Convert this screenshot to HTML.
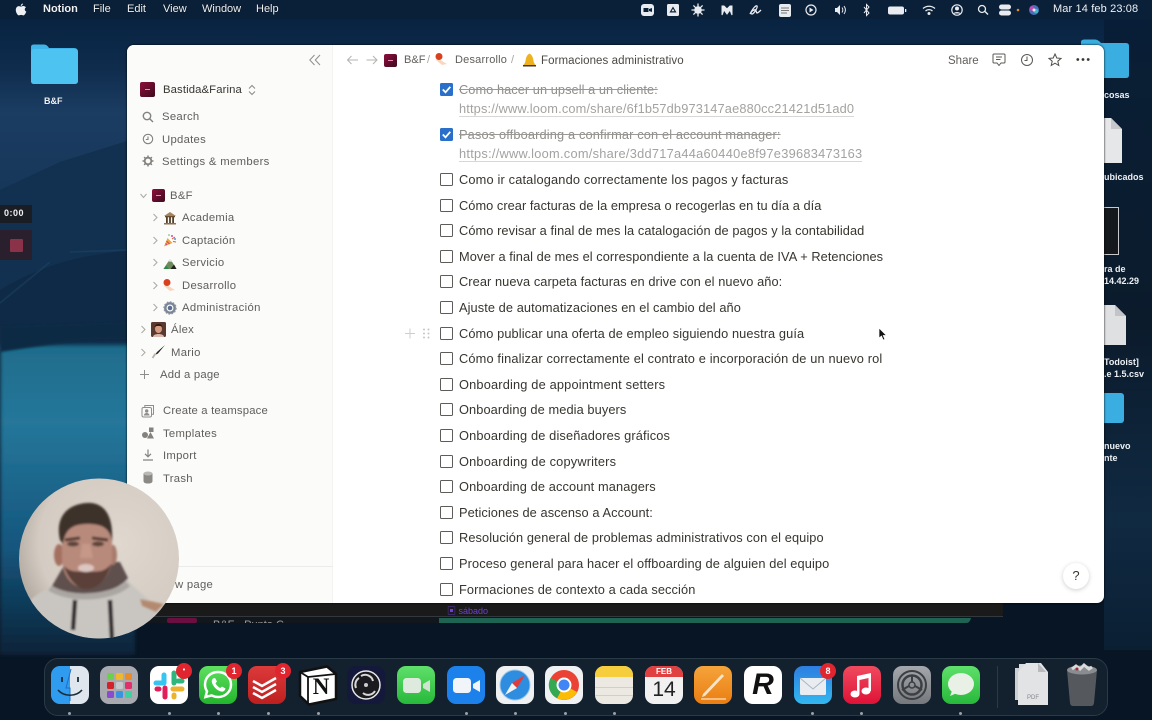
<!DOCTYPE html>
<html><head><meta charset="utf-8"><style>
html,body{margin:0;padding:0;width:1152px;height:720px;overflow:hidden;background:#0a1a2e}
*{box-sizing:border-box}
body{position:relative;font-family:"Liberation Sans","Noto Sans CJK JP",sans-serif;filter:blur(.3px)}
.a{position:absolute}
.t{position:absolute;white-space:nowrap;line-height:16px}
.mb{color:#f0f2f5;font-size:11px;top:1px;font-weight:700;text-shadow:0 0 1px #000}
.dl{color:#eef1f4;font-size:9px;font-weight:700;line-height:11px;text-align:left;white-space:nowrap;position:absolute}
.sb{color:#5f5e5b;font-size:11.3px;letter-spacing:.28px;margin-top:1px}
.r{color:#37352f;font-size:12.8px;letter-spacing:.14px;left:459px}
.d{color:#8f8e8a;font-size:12.8px;letter-spacing:.14px;left:459px;text-decoration:line-through;text-decoration-color:#9a9995}
.l{color:#a3a2a0;font-size:12.8px;letter-spacing:.15px;left:459px;border-bottom:1px solid #d8d7d5;line-height:14px;height:15px}
.cb{position:absolute;left:440px;width:13px;height:13px;border:1.2px solid #5d5c59;border-radius:1.5px;background:#fff}
.ck{position:absolute;left:440px;width:13px;height:13px;background:#2a6fc9;border-radius:1.5px}
.ic{position:absolute;width:38px;height:38px;border-radius:9px;top:666px;overflow:hidden}
.dot{position:absolute;top:712px;width:3px;height:3px;border-radius:50%;background:#9aa0a6}
.bd{position:absolute;top:663px;width:16px;height:16px;border-radius:50%;background:#e0252f;color:#fff;font-size:9px;line-height:16px;text-align:center;font-weight:700}
</style></head><body>

<!-- wallpaper -->
<svg class="a" style="left:0;top:0" width="1152" height="720" viewBox="0 0 1152 720">
<defs>
<linearGradient id="sky" x1="0" y1="0" x2="0" y2="1"><stop offset="0" stop-color="#06203d"/><stop offset=".2" stop-color="#0f2c4d"/><stop offset=".33" stop-color="#1b3d62"/><stop offset="1" stop-color="#0f2a48"/></linearGradient>
<linearGradient id="sea" x1="0" y1="0" x2="0" y2="1"><stop offset="0" stop-color="#1f6c8c"/><stop offset=".25" stop-color="#25779a"/><stop offset=".65" stop-color="#15567e"/><stop offset="1" stop-color="#0a2338"/></linearGradient>
<linearGradient id="rt" x1="0" y1="0" x2="0" y2="1"><stop offset="0" stop-color="#071d38"/><stop offset=".12" stop-color="#0a1e34"/><stop offset=".5" stop-color="#0b1b2c"/><stop offset=".8" stop-color="#102a42"/><stop offset="1" stop-color="#0b1f33"/></linearGradient>
<filter id="b2"><feGaussianBlur stdDeviation="2"/></filter>
<filter id="b1"><feGaussianBlur stdDeviation="1"/></filter>
<filter id="b05"><feGaussianBlur stdDeviation=".5"/></filter>
</defs>
<rect width="1152" height="720" fill="#071524"/>
<rect width="1152" height="340" fill="url(#sky)"/>
<path d="M0 190L60 162L130 140V350H0Z" fill="#12304f"/>
<path d="M0 290C50 260 90 255 130 250V350H0Z" fill="#0f2a46"/>
<path d="M0 303L50 262M70 252L130 250" stroke="#2a5678" stroke-width="1" fill="none" opacity=".55" filter="url(#b05)"/>
<path d="M0 345H135V655H0Z" fill="url(#sea)" filter="url(#b2)"/>
<path d="M0 352C50 345 100 335 135 340V322L0 326Z" fill="#0f2a44" filter="url(#b1)"/>
<rect x="1104" y="0" width="48" height="650" fill="url(#rt)"/>
<!-- notion under window bar -->
<rect x="130" y="617" width="310" height="6" fill="#12171d"/>
<path d="M130 595H1003V613Q1003 617 999 617H130Z" fill="#1a1a1a"/>
<rect x="130" y="616" width="873" height="1" fill="#33383c"/>
<path d="M439 618H971Q970 623 966 623H439Z" fill="#1f6352"/>
<rect x="167" y="618" width="30" height="5" rx="2" fill="#6a0f3f"/>
</svg>
<div class="t" style="left:213px;top:618px;color:#9a9a9a;font-size:11px;height:5px;overflow:hidden;line-height:15px">B&amp;F · Punto C</div>
<div class="t" style="left:447px;top:603px;color:#6f3fd6;font-size:9px;line-height:16px">▣ sábado</div>

<!-- menu bar -->
<div class="a" style="left:0;top:0;width:1152px;height:19px;background:#0a2038"></div>
<svg class="a" style="left:15px;top:3px" width="12" height="13" viewBox="0 0 12 13"><path fill="#eef1f4" d="M8 0.5C7.900 1.800 6.900 2.900 5.800 2.900 5.700 1.700 6.900 .6 8 .5ZM6 3.600C6.600 3.600 7.300 3 8.300 3 9.300 3 10.300 3.500 10.900 4.400 9.200 5.400 9.500 7.900 11.300 8.600 10.800 10 9.600 12.400 8.300 12.400 7.500 12.400 7.100 11.900 6.100 11.900 5.100 11.900 4.700 12.400 3.900 12.400 2.500 12.400 .8 9.300 .8 7 .8 4.600 2.300 3.100 3.900 3.100 4.800 3.100 5.400 3.600 6 3.600Z"/></svg>
<div class="t mb" style="left:43px">Notion</div>
<div class="t mb" style="left:93px;font-weight:400">File</div>
<div class="t mb" style="left:127px;font-weight:400">Edit</div>
<div class="t mb" style="left:163px;font-weight:400">View</div>
<div class="t mb" style="left:202px;font-weight:400">Window</div>
<div class="t mb" style="left:256px;font-weight:400">Help</div>
<svg class="a" style="left:636px;top:0" width="420" height="19" viewBox="0 0 420 19" fill="#e8ebef">
<rect x="5" y="4" width="13" height="12" rx="3"/><rect x="7.500" y="8" width="5" height="4" fill="#0a2038"/><path d="M13 9l3-1v4l-3-1z" fill="#0a2038"/>
<rect x="31" y="4" width="12" height="12" rx="1.500"/><path d="M37 6.500l3.500 6h-7z" fill="#0a2038"/><path d="M37 8.800l1.500 2.500h-3z"/>
<circle cx="62" cy="10" r="3.800"/><path d="M62 3.500v13M55.500 10h13M57.400 5.400l9.200 9.200M66.600 5.400l-9.200 9.200" stroke="#e8ebef" stroke-width="1.300"/>
<path d="M86 15V6l2 0 3 3 3-3 2 0 0 9c-1-2-1.500-4-2-5l-3 4-3-4c-.5 1-1 3-2 5z" stroke="#e8ebef" stroke-width="1"/>
<path d="M114 14c3-6 6-9 7-8s-3 8-5 8-1-3 2-4 2 3 3 3 3-2 4-3" fill="none" stroke="#e8ebef" stroke-width="1.300"/>
<rect x="143" y="4" width="12" height="13" rx="2"/><path d="M145 8h8M145 10.500h8M145 13h6" stroke="#777" stroke-width="1"/>
<circle cx="175" cy="10" r="5" fill="none" stroke="#e8ebef" stroke-width="1.200"/><path d="M173.500 7.500l4 2.500-4 2.500z"/>
<path d="M199 8h2l3-3v10l-3-3h-2z"/><path d="M206 7.500c1 1.500 1 3.500 0 5M208 6c1.800 2.500 1.800 5.500 0 8" fill="none" stroke="#e8ebef"/>
<path d="M228 7l5 6-2.500 2.500v-11l2.500 2.500-5 6" fill="none" stroke="#e8ebef" stroke-width="1"/>
<rect x="252" y="6.500" width="16" height="8" rx="2"/><rect x="269" y="9" width="1.300" height="3"/>
<path d="M287 8.500c3.500-3 8.500-3 12 0M289.500 11c2-1.800 5-1.800 7 0" fill="none" stroke="#e8ebef" stroke-width="1.300"/><circle cx="293" cy="13.500" r="1.500"/>
<circle cx="321" cy="10" r="5.200" fill="none" stroke="#e8ebef" stroke-width="1.200"/><circle cx="321" cy="8.500" r="2"/><path d="M317.500 13.500c1-2 6-2 7 0z"/>
<circle cx="346" cy="9" r="3.500" fill="none" stroke="#e8ebef" stroke-width="1.300"/><path d="M349 11.500l3 3" stroke="#e8ebef" stroke-width="1.400"/>
<rect x="363" y="4.500" width="12" height="5" rx="2.500"/><rect x="363" y="10.500" width="12" height="5" rx="2.500"/>
<circle cx="382" cy="10" r="1.300" fill="#e0892a"/>
<circle cx="398" cy="10" r="5" fill="#4a6fb8"/><circle cx="396" cy="8.500" r="2.400" fill="#c14bb0"/><circle cx="400" cy="11" r="2.300" fill="#3fb6c8"/><circle cx="398" cy="10" r="1.500" fill="#e6e6ef"/>
</svg>
<div class="t" style="left:1053px;top:1px;color:#eef1f4;font-size:11px;letter-spacing:.13px">Mar 14 feb 23:08</div>

<!-- desktop icons -->
<svg class="a" style="left:28px;top:43px" width="52" height="46" viewBox="0 0 52 46"><path d="M3 4Q3 1.500 6 1.500H16Q19 1.500 21 5H46Q50 5 50 9V38Q50 41 46 41H6Q3 41 3 38Z" fill="#3fb4e8"/><rect x="3" y="6" width="47" height="35" rx="3" fill="#4cc3f1"/></svg>
<div class="dl" style="left:44px;top:96px">B&amp;F</div>
<svg class="a" style="left:1080px;top:39px" width="50" height="42" viewBox="0 0 50 42"><path d="M1 3Q1 .5 5 .5H15Q18 .5 21 4H46Q49 4 49 7V36Q49 39 46 39H4Q1 39 1 36Z" fill="#3aaee0"/></svg>
<div class="dl" style="left:1104px;top:90px">cosas</div>
<svg class="a" style="left:1087px;top:117px" width="36" height="47" viewBox="0 0 36 47"><path d="M4 1H24L35 12V46H4Z" fill="#e6e7e9"/><path d="M24 1L35 12H24Z" fill="#c6c8cc"/></svg>
<div class="dl" style="left:1104px;top:172px">ubicados</div>
<div class="a" style="left:1096px;top:207px;width:23px;height:48px;background:#15181c;border:1.500px solid #c7c9cc"></div>
<div class="dl" style="left:1104px;top:264px">ra de</div>
<div class="dl" style="left:1104px;top:276px">14.42.29</div>
<svg class="a" style="left:1089px;top:304px" width="38" height="42" viewBox="0 0 38 42"><path d="M4 1H26L37 12V41H4Z" fill="#dfe0e2"/><path d="M26 1L37 12H26Z" fill="#c2c4c8"/></svg>
<div class="dl" style="left:1104px;top:357px">Todoist]</div>
<div class="dl" style="left:1104px;top:369px">.e 1.5.csv</div>
<div class="a" style="left:1095px;top:393px;width:29px;height:30px;background:#3aaee0;border-radius:3px"></div>
<div class="dl" style="left:1104px;top:441px">nuevo</div>
<div class="dl" style="left:1104px;top:453px">nte</div>

<!-- window -->
<div class="a" style="left:127px;top:45px;width:977px;height:558px;background:#fff;border-radius:7px;overflow:hidden;box-shadow:0 0 2px #000">
<div class="a" style="left:0;top:0;width:206px;height:558px;background:#fbfbfa;border-right:1px solid #f3f3f1"></div>
<div class="a" style="left:0;top:521px;width:206px;height:1px;background:#ecebe9"></div>
</div>

<!-- sidebar -->
<svg class="a" style="left:309px;top:54px" width="12" height="12" viewBox="0 0 12 12" fill="none" stroke="#8f8e8b" stroke-width="1"><path d="M5.500 1L.8 6l4.700 5M11 1L6.300 6l4.700 5"/></svg>
<div class="a" style="left:140px;top:82px;width:15px;height:15px;border-radius:2px;background:linear-gradient(135deg,#8c0f3c,#3e0a1e)"><div class="a" style="left:5px;top:7px;width:5px;height:1px;background:#e8b"></div></div>
<div class="t" style="left:163px;top:82px;color:#37352f;font-size:11.3px;letter-spacing:.12px">Bastida&amp;Farina</div>
<svg class="a" style="left:247px;top:84px" width="10" height="12" viewBox="0 0 10 12" fill="none" stroke="#8a8985" stroke-width="1"><path d="M2 4.500L5 1.500l3 3M2 7.500l3 3 3-3"/></svg>

<svg class="a" style="left:141px;top:110px" width="14" height="14" viewBox="0 0 14 14" fill="none" stroke="#84827e" stroke-width="1.400"><circle cx="6" cy="6" r="3.700"/><path d="M8.700 8.700L12 12"/></svg>
<div class="t sb" style="left:162px;top:108px">Search</div>
<svg class="a" style="left:141px;top:132px" width="14" height="14" viewBox="0 0 14 14" fill="none" stroke="#84827e" stroke-width="1.100"><circle cx="7" cy="7" r="4.700"/><path d="M7 4.500V7.500H4.800"/></svg>
<div class="t sb" style="left:162px;top:131px">Updates</div>
<svg class="a" style="left:141px;top:154px" width="14" height="14" viewBox="0 0 14 14" fill="none" stroke="#84827e"><circle cx="7" cy="7" r="3.300" stroke-width="1.800"/><path d="M7 1.500v2.400M7 10.100v2.400M1.500 7h2.400M10.100 7h2.400M3.100 3.100l1.700 1.700M9.200 9.200l1.700 1.700M3.100 10.900l1.700-1.700M9.200 4.800l1.700-1.700" stroke-width="1.500"/></svg>
<div class="t sb" style="left:162px;top:153px;letter-spacing:.33px">Settings &amp; members</div>

<svg class="a" style="left:139px;top:191px" width="9" height="9" viewBox="0 0 9 9" fill="none" stroke="#a8a7a3"><path d="M1.500 3L4.500 6.500 7.500 3"/></svg>
<div class="a" style="left:152px;top:189px;width:13px;height:13px;border-radius:2px;background:linear-gradient(135deg,#8c0f3c,#3e0a1e)"><div class="a" style="left:4px;top:6px;width:5px;height:1px;background:#e8b"></div></div>
<div class="t sb" style="left:170px;top:187px">B&amp;F</div>

<svg class="a" style="left:151px;top:213px" width="8" height="9" viewBox="0 0 8 9" fill="none" stroke="#a8a7a3"><path d="M2.500 1L6 4.500 2.500 8"/></svg>
<svg class="a" style="left:163px;top:211px" width="14" height="14" viewBox="0 0 14 14"><path d="M1 5L7 1l6 4z" fill="#a58560"/><rect x="2" y="5" width="10" height="1.300" fill="#6a4f33"/><rect x="3" y="6" width="1.800" height="6" fill="#574027"/><rect x="6.100" y="6" width="1.800" height="6" fill="#574027"/><rect x="9.200" y="6" width="1.800" height="6" fill="#574027"/><rect x="1" y="12" width="12" height="1.500" fill="#8c7352"/></svg>
<div class="t sb" style="left:182px;top:209px">Academia</div>

<svg class="a" style="left:151px;top:236px" width="8" height="9" viewBox="0 0 8 9" fill="none" stroke="#a8a7a3"><path d="M2.500 1L6 4.500 2.500 8"/></svg>
<svg class="a" style="left:163px;top:233px" width="14" height="14" viewBox="0 0 14 14"><path d="M1 13.500L4.500 5l5 5z" fill="#eca93a"/><path d="M3.500 8l3 3M2.500 10.500l1.500 1.500" stroke="#d4457a" stroke-width="1.200"/><circle cx="9" cy="3" r="1" fill="#d64b9a"/><circle cx="12" cy="6" r="1" fill="#4b9ad6"/><circle cx="6" cy="2" r=".8" fill="#57b35f"/><path d="M9 6l3-2M10 8.500l3 .5" stroke="#e0562d" stroke-width="1"/></svg>
<div class="t sb" style="left:182px;top:232px">Captación</div>

<svg class="a" style="left:151px;top:258px" width="8" height="9" viewBox="0 0 8 9" fill="none" stroke="#a8a7a3"><path d="M2.500 1L6 4.500 2.500 8"/></svg>
<svg class="a" style="left:163px;top:256px" width="14" height="14" viewBox="0 0 14 14"><path d="M.5 13L5 6l2-3 2.500 3.500L13.500 13z" fill="#6f8a5a"/><path d="M5.500 5.500L7 3l1.800 3-1.500-.5z" fill="#eef3f5"/><path d="M.5 13L3 9.500 6 13z" fill="#2b8a4a"/><path d="M7.500 13L11 8.500l2.500 4.500z" fill="#222"/></svg>
<div class="t sb" style="left:182px;top:254px">Servicio</div>

<svg class="a" style="left:151px;top:281px" width="8" height="9" viewBox="0 0 8 9" fill="none" stroke="#a8a7a3"><path d="M2.500 1L6 4.500 2.500 8"/></svg>
<svg class="a" style="left:162px;top:278px" width="15" height="15" viewBox="0 0 15 15"><path d="M3 6L13 12 8 13 2 8z" fill="#f9d7bd"/><circle cx="5" cy="4.500" r="3.500" fill="#d9411e"/></svg>
<div class="t sb" style="left:182px;top:277px">Desarrollo</div>

<svg class="a" style="left:151px;top:303px" width="8" height="9" viewBox="0 0 8 9" fill="none" stroke="#a8a7a3"><path d="M2.500 1L6 4.500 2.500 8"/></svg>
<svg class="a" style="left:163px;top:301px" width="14" height="14" viewBox="0 0 14 14"><circle cx="7" cy="7" r="4.700" fill="none" stroke="#7b8493" stroke-width="2.400"/><circle cx="7" cy="7" r="6" fill="none" stroke="#8e96a3" stroke-width="1.400" stroke-dasharray="1.600 1.500"/><circle cx="7" cy="7" r="2.300" fill="#5a6f98"/></svg>
<div class="t sb" style="left:182px;top:299px;letter-spacing:.33px">Administración</div>

<svg class="a" style="left:139px;top:325px" width="8" height="9" viewBox="0 0 8 9" fill="none" stroke="#a8a7a3"><path d="M2.500 1L6 4.500 2.500 8"/></svg>
<svg class="a" style="left:151px;top:322px" width="15" height="15" viewBox="0 0 15 15"><rect width="15" height="15" rx="1.500" fill="#5a3a2e"/><path d="M2 15c0-4 11-4 11 0z" fill="#d9b8b0"/><ellipse cx="7.500" cy="7" rx="3.500" ry="4" fill="#d69a80"/><path d="M3.500 5c1-4 7-4 8 0-2-1.500-6-1.500-8 0z" fill="#2c1a12"/></svg>
<div class="t sb" style="left:171px;top:321px">Álex</div>

<svg class="a" style="left:139px;top:348px" width="8" height="9" viewBox="0 0 8 9" fill="none" stroke="#a8a7a3"><path d="M2.500 1L6 4.500 2.500 8"/></svg>
<svg class="a" style="left:151px;top:344px" width="15" height="15" viewBox="0 0 15 15"><path d="M14 1L6 8 4 11l3-1.500z" fill="#222"/><path d="M4.500 9.500L1.500 14" stroke="#b9b3aa" stroke-width="1.800"/></svg>
<div class="t sb" style="left:171px;top:344px">Mario</div>

<svg class="a" style="left:139px;top:369px" width="11" height="11" viewBox="0 0 11 11" stroke="#8f8e8a" stroke-width="1"><path d="M5.500 1v9M1 5.500h9"/></svg>
<div class="t sb" style="left:160px;top:366px;letter-spacing:.2px">Add a page</div>

<svg class="a" style="left:141px;top:404px" width="14" height="14" viewBox="0 0 14 14" fill="none" stroke="#8f8e8a" stroke-width="1"><rect x="1" y="3.500" width="9.500" height="9.500" rx="1.500"/><path d="M3.800 3.500V1.500h8.700v8.700h-2"/><circle cx="5.700" cy="7" r="1.200" fill="#8f8e8a"/><path d="M3.500 11c.5-2 3.800-2 4.400 0z" fill="#8f8e8a"/></svg>
<div class="t sb" style="left:163px;top:402px;letter-spacing:.18px">Create a teamspace</div>
<svg class="a" style="left:141px;top:426px" width="14" height="14" viewBox="0 0 14 14" fill="#84827e"><circle cx="4" cy="9" r="3"/><rect x="8" y="1.500" width="4.500" height="4.500"/><path d="M9.500 6l3.500 6.500H6z"/></svg>
<div class="t sb" style="left:163px;top:425px">Templates</div>
<svg class="a" style="left:141px;top:448px" width="14" height="14" viewBox="0 0 14 14" fill="none" stroke="#84827e" stroke-width="1.200"><path d="M7 1.500v7M4 5.800L7 8.800l3-3M2 12h10"/></svg>
<div class="t sb" style="left:163px;top:447px">Import</div>
<svg class="a" style="left:141px;top:470px" width="14" height="14" viewBox="0 0 14 14"><path d="M2.500 3h9v8c0 1.500-1.500 2.500-4.500 2.500S2.500 12.500 2.500 11z" fill="#8a8985"/><ellipse cx="7" cy="3.500" rx="4.500" ry="2" fill="#b9b8b5"/></svg>
<div class="t sb" style="left:163px;top:470px">Trash</div>
<div class="t sb" style="left:175px;top:576px">w page</div>

<!-- topbar -->
<svg class="a" style="left:346px;top:54px" width="33" height="12" viewBox="0 0 33 12" fill="none" stroke="#b4b3b0" stroke-width="1"><path d="M12 6H1.500M5.500 2L1.500 6l4 4M20.500 6H31M27 2l4 4-4 4"/></svg>
<div class="a" style="left:384px;top:54px;width:13px;height:13px;border-radius:2px;background:linear-gradient(135deg,#8c0f3c,#3e0a1e)"><div class="a" style="left:4px;top:6px;width:5px;height:1px;background:#e8b"></div></div>
<div class="t" style="left:404px;top:52px;color:#5f5e5b;font-size:11px;letter-spacing:.05px">B&amp;F</div>
<div class="t" style="left:427px;top:52px;color:#a5a4a1;font-size:11px">/</div>
<svg class="a" style="left:434px;top:52px" width="15" height="15" viewBox="0 0 15 15"><path d="M3 6L13 12 8 13 2 8z" fill="#f9d7bd"/><circle cx="5" cy="4.500" r="3.500" fill="#d9411e"/></svg>
<div class="t" style="left:455px;top:52px;color:#5f5e5b;font-size:11px;letter-spacing:.2px">Desarrollo</div>
<div class="t" style="left:511px;top:52px;color:#a5a4a1;font-size:11px">/</div>
<svg class="a" style="left:522px;top:53px" width="15" height="15" viewBox="0 0 15 15"><path d="M7.500 .5C10 2 11 4 11.500 8c.3 2 1.500 3 2 4H1.500c.5-1 1.700-2 2-4 .5-4 1.500-6 4-7.500z" fill="#eeb11f"/><path d="M1 12h13v1.500H1z" fill="#3a3a3a"/></svg>
<div class="t" style="left:541px;top:53px;color:#4a4843;font-size:11.500px;letter-spacing:.08px">Formaciones administrativo</div>
<div class="t" style="left:948px;top:52px;color:#5f5e5b;font-size:11.500px;margin-top:.5px">Share</div>
<svg class="a" style="left:992px;top:53px" width="14" height="14" viewBox="0 0 14 14" fill="none" stroke="#5a5955" stroke-width="1"><path d="M2 1h10q1 0 1 1v7q0 1-1 1H9l-2 2.500L5 10H2q-1 0-1-1V2q0-1 1-1zM4 4h6M4 6.500h4.500"/></svg>
<svg class="a" style="left:1020px;top:53px" width="14" height="14" viewBox="0 0 14 14" fill="none" stroke="#5a5955" stroke-width="1"><circle cx="7" cy="7" r="5.500"/><path d="M7 3.500V7.500H4.500"/></svg>
<svg class="a" style="left:1048px;top:53px" width="14" height="14" viewBox="0 0 14 14" fill="none" stroke="#4f4e4a" stroke-width="1"><path d="M7 1l1.800 4 4.200.4-3.200 2.800 1 4.300L7 10.200 3.200 12.500l1-4.300L1 5.400 5.200 5z"/></svg>
<svg class="a" style="left:1076px;top:57px" width="14" height="5" viewBox="0 0 14 5" fill="#37352f"><circle cx="1.800" cy="2.500" r="1.400"/><circle cx="7" cy="2.500" r="1.400"/><circle cx="12.200" cy="2.500" r="1.400"/></svg>

<!-- content -->
<div class="ck" style="top:83px"></div><svg class="a" style="left:440px;top:83px" width="13" height="13" viewBox="0 0 13 13" fill="none" stroke="#fff" stroke-width="1.800"><path d="M2.800 6.500l2.700 2.800 4.800-5.500"/></svg>
<div class="t d" style="top:82px;letter-spacing:.05px">Como hacer un upsell a un cliente:</div>
<div class="t l" style="top:102px">https://www.loom.com/share/6f1b57db973147ae880cc21421d51ad0</div>
<div class="ck" style="top:128px"></div><svg class="a" style="left:440px;top:128px" width="13" height="13" viewBox="0 0 13 13" fill="none" stroke="#fff" stroke-width="1.800"><path d="M2.800 6.500l2.700 2.800 4.800-5.500"/></svg>
<div class="t d" style="top:127px">Pasos offboarding a confirmar con el account manager:</div>
<div class="t l" style="top:147px;letter-spacing:.265px">https://www.loom.com/share/3dd717a44a60440e8f97e39683473163</div>

<div class="cb" style="top:173px"></div><div class="t r" style="top:172px;letter-spacing:.16px">Como ir catalogando correctamente los pagos y facturas</div>
<div class="cb" style="top:199px"></div><div class="t r" style="top:198px;letter-spacing:.04px">Cómo crear facturas de la empresa o recogerlas en tu día a día</div>
<div class="cb" style="top:224px"></div><div class="t r" style="top:223px;letter-spacing:.08px">Cómo revisar a final de mes la catalogación de pagos y la contabilidad</div>
<div class="cb" style="top:250px"></div><div class="t r" style="top:249px;letter-spacing:.06px">Mover a final de mes el correspondiente a la cuenta de IVA + Retenciones</div>
<div class="cb" style="top:275px"></div><div class="t r" style="top:274px;letter-spacing:.07px">Crear nueva carpeta facturas en drive con el nuevo año:</div>
<div class="cb" style="top:301px"></div><div class="t r" style="top:300px;letter-spacing:.08px">Ajuste de automatizaciones en el cambio del año</div>
<div class="cb" style="top:327px"></div><div class="t r" style="top:326px;letter-spacing:.09px">Cómo publicar una oferta de empleo siguiendo nuestra guía</div>
<div class="cb" style="top:352px"></div><div class="t r" style="top:351px">Cómo finalizar correctamente el contrato e incorporación de un nuevo rol</div>
<div class="cb" style="top:378px"></div><div class="t r" style="top:377px;letter-spacing:.17px">Onboarding de appointment setters</div>
<div class="cb" style="top:403px"></div><div class="t r" style="top:402px;letter-spacing:.09px">Onboarding de media buyers</div>
<div class="cb" style="top:429px"></div><div class="t r" style="top:428px">Onboarding de diseñadores gráficos</div>
<div class="cb" style="top:455px"></div><div class="t r" style="top:454px;letter-spacing:.17px">Onboarding de copywriters</div>
<div class="cb" style="top:480px"></div><div class="t r" style="top:479px;letter-spacing:.11px">Onboarding de account managers</div>
<div class="cb" style="top:506px"></div><div class="t r" style="top:505px;letter-spacing:.08px">Peticiones de ascenso a Account:</div>
<div class="cb" style="top:531px"></div><div class="t r" style="top:530px;letter-spacing:.09px">Resolución general de problemas administrativos con el equipo</div>
<div class="cb" style="top:557px"></div><div class="t r" style="top:556px;letter-spacing:.1px">Proceso general para hacer el offboarding de alguien del equipo</div>
<div class="cb" style="top:583px"></div><div class="t r" style="top:582px;letter-spacing:.1px">Formaciones de contexto a cada sección</div>

<svg class="a" style="left:404px;top:327px" width="28" height="13" viewBox="0 0 28 13"><path d="M6 1.500v10M1 6.500h10" stroke="#cfcecb" stroke-width="1"/><g fill="#c6c5c2"><circle cx="20" cy="2.500" r="1"/><circle cx="24.500" cy="2.500" r="1"/><circle cx="20" cy="6.500" r="1"/><circle cx="24.500" cy="6.500" r="1"/><circle cx="20" cy="10.500" r="1"/><circle cx="24.500" cy="10.500" r="1"/></g></svg>
<svg class="a" style="left:878px;top:327px" width="9" height="14" viewBox="0 0 9 14"><path d="M1 1v10l2.500-2 1.700 4 1.700-.7-1.700-3.800H8.500z" fill="#111" stroke="#fff" stroke-width=".7"/></svg>
<div class="a" style="left:1063px;top:563px;width:26px;height:26px;border-radius:50%;background:#fff;box-shadow:0 1px 5px rgba(0,0,0,.2);color:#37352f;font-size:13px;line-height:26px;text-align:center">?</div>

<!-- webcam -->
<svg class="a" style="left:18px;top:478px" width="162" height="162" viewBox="0 0 162 162">
<defs><clipPath id="c"><circle cx="81" cy="80.500" r="80"/></clipPath><radialGradient id="bgc" cx=".62" cy=".4" r=".7"><stop offset="0" stop-color="#e0d8cf"/><stop offset=".7" stop-color="#d4ccc3"/><stop offset="1" stop-color="#a9a096"/></radialGradient></defs>
<g clip-path="url(#c)"><rect width="162" height="162" fill="url(#bgc)"/>
<g filter="url(#b1)">
<path d="M12 122C25 112 32 110 42 104L108 100C118 112 130 120 142 132L130 162H24Z" fill="#c9c6c1"/>
<path d="M34 108C46 118 96 120 110 100L102 84H48Z" fill="#5e504e"/>
<path d="M32 110C50 122 92 122 110 106" stroke="#aaa6a1" stroke-width="6" fill="none"/>
<ellipse cx="41" cy="77" rx="5" ry="11" fill="#a46f60"/><ellipse cx="95" cy="77" rx="4" ry="10" fill="#a87a6c"/>
<path d="M44 55C44 40 92 40 94 55V82C92 100 80 110 68 110C54 110 45 98 44 82Z" fill="#b88a7c"/>
<path d="M42 62C38 45 44 30 62 26C82 21 96 32 94 64C92 50 84 46 70 46C56 46 47 50 45 66Z" fill="#3e302b"/>
<path d="M46 88C50 102 60 111 68 111C80 111 90 100 93 86C86 95 78 94 68 93C58 94 52 94 46 88Z" fill="#5a3f37"/>
<path d="M47 62L62 60M74 60L90 62" stroke="#4c362f" stroke-width="3"/>
<ellipse cx="55" cy="66" rx="6" ry="2.500" fill="#5c4238"/><ellipse cx="80" cy="66" rx="6" ry="2.500" fill="#5c4238"/>
<ellipse cx="68" cy="90" rx="8" ry="4" fill="#dcc6c0"/>
<path d="M64 66L62 80H75L72 66Z" fill="#c59888"/>
<path d="M57 122L55 152M92 122L94 162" stroke="#312b2e" stroke-width="4.500" fill="none"/>
<path d="M122 121L146 126 138 134 124 128Z" fill="#b38a6f"/>
</g></g></svg>

<!-- dock -->
<div class="a" style="left:44px;top:658px;width:1064px;height:58px;border:1px solid #2a3a47;border-radius:14px;background:rgba(30,42,54,.55)"></div>

<div class="ic" style="left:51px;background:linear-gradient(90deg,#2f9cf0 50%,#dfe6ee 50%)"><svg width="38" height="38" viewBox="0 0 38 38" fill="none"><path d="M20 3L15 22h4v13" stroke="#1d6ec7" stroke-width="1"/><path d="M7 24c6 7 18 7 24 0" stroke="#1b2b3a" stroke-width="1.600"/><path d="M11 11v5M27 11v5" stroke="#1b2b3a" stroke-width="1.800"/></svg></div>
<div class="ic" style="left:100px;background:#a8aab0"><svg width="38" height="38" viewBox="0 0 38 38"><g><rect x="7" y="7" width="7" height="7" rx="1.500" fill="#6bd04c"/><rect x="16" y="7" width="7" height="7" rx="1.500" fill="#f0b82f"/><rect x="25" y="7" width="7" height="7" rx="1.500" fill="#e98b28"/><rect x="7" y="16" width="7" height="7" rx="1.500" fill="#d1222c"/><rect x="16" y="16" width="7" height="7" rx="1.500" fill="#c5c8cc"/><rect x="25" y="16" width="7" height="7" rx="1.500" fill="#e0306a"/><rect x="7" y="25" width="7" height="7" rx="1.500" fill="#8a4bd0"/><rect x="16" y="25" width="7" height="7" rx="1.500" fill="#3a93e0"/><rect x="25" y="25" width="7" height="7" rx="1.500" fill="#3dd0a0"/></g></svg></div>
<div class="ic" style="left:150px;background:#fff"><svg width="38" height="38" viewBox="0 0 38 38" stroke-linecap="round" stroke-width="5" fill="none"><path d="M15 8v8M7 16h8" stroke="#36c5f0" transform="translate(-1,1)"/><path d="M24 7v10" stroke="#2eb67d"/><path d="M32 15h-4" stroke="#2eb67d"/><path d="M23 23h9" stroke="#ecb22e"/><path d="M24 31v-2" stroke="#ecb22e"/><path d="M15 22v9" stroke="#e01e5a"/><path d="M7 23h2" stroke="#e01e5a"/></svg></div>
<div class="ic" style="left:199px;background:linear-gradient(#5fe060,#22b52c)"><svg width="38" height="38" viewBox="0 0 38 38" fill="none"><path d="M19 6c-7.500 0-13 5.500-13 12.500 0 2.500.7 4.800 2 6.800L6.500 31l6-1.600c2 1 4.200 1.600 6.500 1.600 7.500 0 13-5.500 13-12.500S26.500 6 19 6z" stroke="#fff" stroke-width="2.500"/><path d="M14 12.500c-1.500 1.500-1.800 3.500 0 6.500 2 3.500 5 5.700 8 6.500 2.500.6 4-1 4.500-3l-3.500-2-1.800 1.500c-1.800-.8-3.700-2.700-4.700-4.700l1.500-1.800-2-3.500z" fill="#fff"/></svg></div>
<div class="ic" style="left:248px;background:linear-gradient(#dd3a3a,#bd1f1f)"><svg width="38" height="38" viewBox="0 0 38 38" fill="none" stroke="#fff" stroke-width="2.500"><path d="M5 15l9 5 14-8M5 21l9 5 14-8M5 27l9 5 14-8"/></svg></div>
<svg class="a" style="left:298px;top:665px" width="40" height="41" viewBox="0 0 40 41"><path d="M2 7L29 1.500 38 9V34L11 39.500 2 31Z" fill="#fff" stroke="#111" stroke-width="2.500" stroke-linejoin="round"/><path d="M2 7L10 12 38 9" fill="none" stroke="#111" stroke-width="1.800"/><path d="M10 12V39" stroke="#111" stroke-width="1.800"/></svg>
<div class="t" style="left:306px;top:675px;width:30px;text-align:center;color:#111;font:700 23px/24px 'Liberation Serif',serif">N</div>
<div class="ic" style="left:347px;background:#14183a"><svg width="38" height="38" viewBox="0 0 38 38" fill="none"><circle cx="19" cy="19" r="14" fill="#1b1b1f" stroke="#e8e8e8" stroke-width="1.500"/><path d="M14 10a8 8 0 0 1 12 5M28 25a8 8 0 0 1-12 2M9 22a8 8 0 0 1 3-10" stroke="#d8d8d8" stroke-width="2"/><circle cx="19" cy="19" r="2" fill="#ccc"/></svg></div>
<div class="ic" style="left:397px;background:linear-gradient(#5fe06a,#27b83a)"><svg width="38" height="38" viewBox="0 0 38 38"><rect x="6" y="12" width="18" height="15" rx="3.500" fill="#dfeadf"/><path d="M26 18l7-4v12l-7-4z" fill="#cfe3cf"/></svg></div>
<div class="ic" style="left:447px;background:#1c81ea"><svg width="38" height="38" viewBox="0 0 38 38"><rect x="6" y="12" width="18" height="15" rx="3.500" fill="#f1f5fa"/><path d="M26 18l7-4v12l-7-4z" fill="#f1f5fa"/></svg></div>
<div class="ic" style="left:496px;background:#eef0f2"><svg width="38" height="38" viewBox="0 0 38 38"><circle cx="19" cy="19" r="15" fill="#2f8de0" stroke="#9cc7ea"/><path d="M29 9L16 17l5 5z" fill="#e23b3b"/><path d="M9 29l7-12 5 5z" fill="#f2f2f2"/></svg></div>
<div class="ic" style="left:545px;background:#f0f1f2"><svg width="38" height="38" viewBox="0 0 38 38"><circle cx="19" cy="19" r="15" fill="#ea4335"/><path d="M19 19L32 26A15 15 0 0 1 12 32.300Z" fill="#fbbc05"/><path d="M19 19L12 32.300A15 15 0 0 1 5.500 12Z" fill="#34a853"/><circle cx="19" cy="19" r="7.500" fill="#fff"/><circle cx="19" cy="19" r="5.500" fill="#4285f4"/></svg></div>
<div class="ic" style="left:595px;background:#ece9e2"><div class="a" style="left:0;top:0;width:38px;height:11px;background:#f6cd3c"></div><div class="a" style="left:0;top:21px;width:38px;height:1px;background:#d2cfc9"></div><div class="a" style="left:0;top:29px;width:38px;height:1px;background:#d2cfc9"></div></div>
<div class="ic" style="left:645px;background:#f1f1f1"><div class="a" style="left:0;top:0;width:38px;height:11px;background:#e0403f;color:#fff;font-size:8px;font-weight:700;line-height:12px;text-align:center">FEB</div><div class="a" style="left:0;top:12px;width:38px;text-align:center;color:#222;font-size:21px;line-height:24px">14</div></div>
<div class="ic" style="left:694px;background:linear-gradient(#f5a33b,#ea7d12)"><svg width="38" height="38" viewBox="0 0 38 38" fill="none"><path d="M9 28L28 8l2 2-19 20-3 1z" fill="#f8e4c8"/><path d="M7 33h25" stroke="#f8d3a5" stroke-width="1.500"/></svg></div>
<div class="ic" style="left:744px;background:#fff"><div class="a" style="left:0;top:3px;width:38px;text-align:center;color:#111;font:italic 700 30px/32px 'Liberation Sans',sans-serif">R</div></div>
<div class="ic" style="left:794px;background:linear-gradient(#2d7ee0,#33b8f0)"><svg width="38" height="38" viewBox="0 0 38 38"><rect x="6" y="12" width="26" height="17" rx="1.500" fill="#e9edf1"/><path d="M6 12l13 11 13-11" fill="none" stroke="#a9b6c2" stroke-width="1"/></svg></div>
<div class="ic" style="left:843px;background:linear-gradient(#f04a5f,#de1236)"><svg width="38" height="38" viewBox="0 0 38 38" fill="#fff"><path d="M14 10l14-3v18h-2.500V12l-9 2v14h-2.500z"/><ellipse cx="12" cy="28" rx="4.500" ry="3.500"/><ellipse cx="23" cy="25" rx="4.500" ry="3.500"/></svg></div>
<div class="ic" style="left:893px;background:linear-gradient(#a4a8ad,#75797e)"><svg width="38" height="38" viewBox="0 0 38 38" fill="none" stroke="#3d3f42"><circle cx="19" cy="19" r="14" stroke-width="2"/><circle cx="19" cy="19" r="9.500" stroke-width="2.500"/><circle cx="19" cy="19" r="3" stroke-width="1.500"/><path d="M19 10v6M22 20l7 4M16 20l-7 4" stroke-width="2"/></svg></div>
<div class="ic" style="left:942px;background:linear-gradient(#5fe06a,#27b83a)"><svg width="38" height="38" viewBox="0 0 38 38"><ellipse cx="19" cy="18" rx="13" ry="11" fill="#e9f0e6"/><path d="M10 25l-2 5 7-3z" fill="#e9f0e6"/></svg></div>
<div class="a" style="left:997px;top:666px;width:1px;height:42px;background:#2c3a47"></div>
<svg class="a" style="left:1013px;top:662px" width="38" height="46" viewBox="0 0 38 46"><rect x="2" y="6" width="26" height="32" fill="#cdd0d2"/><rect x="6" y="2" width="22" height="36" fill="#dadcde"/><path d="M13 1h15l7 9v33H5V10z" fill="#e2e3e5"/><path d="M25 1l8 9h-8z" fill="#b8babd"/></svg>
<div class="t" style="left:1027px;top:693px;color:#85878a;font-size:6px;line-height:10px">PDF</div>
<svg class="a" style="left:1064px;top:663px" width="36" height="44" viewBox="0 0 36 44"><path d="M3 7h30l-3 33q-.5 3-3 3H9q-2.500 0-3-3z" fill="#55595e"/><ellipse cx="18" cy="7" rx="15" ry="4.500" fill="#8a8d90"/><path d="M8 6l4-3 4 3 4-4 5 4 3-2" stroke="#d9d9d9" stroke-width="3" fill="none"/><circle cx="13" cy="6" r="1.500" fill="#9c2b3a"/></svg>

<div class="bd" style="left:176px;font-size:7px">•</div>
<div class="bd" style="left:226px">1</div>
<div class="bd" style="left:275px">3</div>
<div class="bd" style="left:820px">8</div>

<div class="dot" style="left:68px"></div><div class="dot" style="left:168px"></div><div class="dot" style="left:217px"></div><div class="dot" style="left:267px"></div><div class="dot" style="left:317px"></div><div class="dot" style="left:465px"></div><div class="dot" style="left:514px"></div><div class="dot" style="left:564px"></div><div class="dot" style="left:613px"></div><div class="dot" style="left:811px"></div><div class="dot" style="left:860px"></div><div class="dot" style="left:959px"></div>

<!-- recording -->
<div class="a" style="left:0;top:205px;width:32px;height:18px;background:#1a1d24;color:#f2f2f2;font-size:9px;font-weight:700;line-height:17px;padding-left:4px;letter-spacing:.5px">0:00</div>
<div class="a" style="left:0;top:230px;width:32px;height:30px;background:#2a1f2c"></div>
<div class="a" style="left:10px;top:239px;width:13px;height:13px;border-radius:1px;background:#8a3247"></div>
</body></html>
